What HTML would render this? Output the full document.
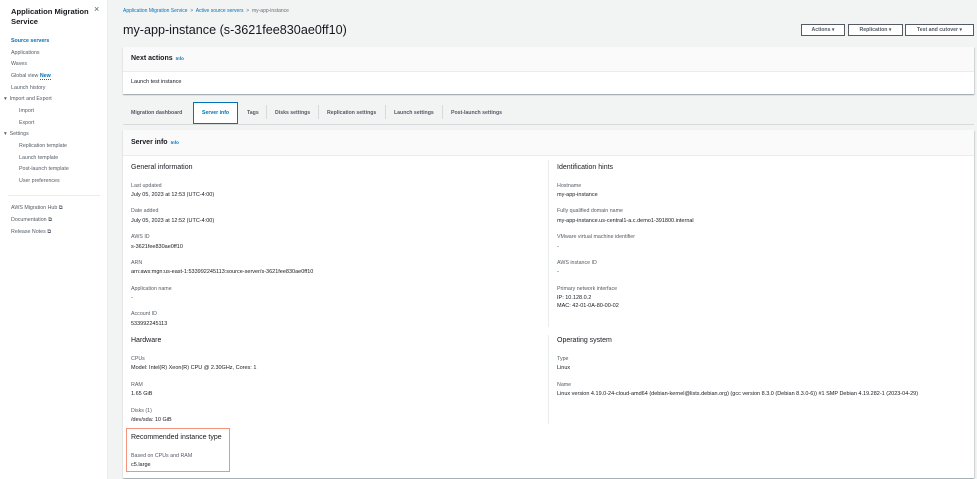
<!DOCTYPE html>
<html><head><meta charset="utf-8"><style>
*{margin:0;padding:0;box-sizing:border-box}
body{width:977px;height:479px;overflow:hidden;background:#f2f3f3;font-family:"Liberation Sans",sans-serif;color:#16191f;position:relative}
.a{position:absolute;white-space:nowrap}
#side{position:absolute;left:0;top:0;width:108px;height:479px;background:#fff;border-right:1px solid #eaeded}
.s{position:absolute;font-size:5.3px;color:#545b64;white-space:nowrap}
.card{position:absolute;background:#fff;box-shadow:0 1px 1px rgba(0,28,36,.3),1px 1px 1px rgba(0,28,36,.1)}
.hd{background:#fafafa;border-bottom:1px solid #eaeded;position:absolute;left:0;right:0;top:0}
.h2{font-size:7px;font-weight:bold}
.info{color:#0073bb;font-size:4.5px;font-weight:bold;margin-left:3px}
.h3{font-size:7px;color:#16191f}
.l{font-size:5.3px;color:#545b64}
.v{font-size:5.5px;color:#16191f}
.btn{position:absolute;top:24px;height:12px;border:1px solid #545b64;background:#fff;font-size:5.2px;font-weight:bold;color:#545b64;text-align:center;line-height:10px}
.tab{position:absolute;top:110px;font-size:5.2px;font-weight:bold;color:#545b64}
.sep{position:absolute;top:105px;width:1px;height:14px;background:#d5dbdb}
</style></head><body>
<div id="side">
<div class="a" style="left:11px;top:7px;font-size:7.6px;font-weight:bold;line-height:9.5px">Application Migration<br>Service</div>
<div class="a" style="left:94px;top:4px;font-size:9px;color:#545b64">×</div>
<div class="s" style="left:11px;top:38px;color:#0073bb;font-weight:bold">Source servers</div>
<div class="s" style="left:11px;top:50px">Applications</div>
<div class="s" style="left:11px;top:61px">Waves</div>
<div class="s" style="left:11px;top:73px">Global view <span style="color:#0073bb;font-weight:bold;border-bottom:1px dotted #0073bb">New</span></div>
<div class="s" style="left:11px;top:85px">Launch history</div>
<div class="s" style="left:4px;top:96px">▾ &nbsp;Import and Export</div>
<div class="s" style="left:19px;top:108px">Import</div>
<div class="s" style="left:19px;top:120px">Export</div>
<div class="s" style="left:4px;top:131px">▾ &nbsp;Settings</div>
<div class="s" style="left:19px;top:143px">Replication template</div>
<div class="s" style="left:19px;top:155px">Launch template</div>
<div class="s" style="left:19px;top:166px">Post-launch template</div>
<div class="s" style="left:19px;top:178px">User preferences</div>
<div style="position:absolute;left:8px;top:195px;width:92px;height:1px;background:#eaeded"></div>
<div class="s" style="left:11px;top:205px">AWS Migration Hub ⧉</div>
<div class="s" style="left:11px;top:217px">Documentation ⧉</div>
<div class="s" style="left:11px;top:229px">Release Notes ⧉</div>
</div>

<div class="a" style="left:123px;top:8px;font-size:5px;color:#0073bb">Application Migration Service <span style="color:#687078">&nbsp;&gt;&nbsp;</span> Active source servers <span style="color:#687078">&nbsp;&gt;&nbsp; my-app-instance</span></div>
<div class="a" style="left:123px;top:23px;font-size:12.6px;color:#16191f">my-app-instance (s-3621fee830ae0ff10)</div>
<div class="btn" style="left:801px;width:44px">Actions ▾</div>
<div class="btn" style="left:848px;width:55px">Replication ▾</div>
<div class="btn" style="left:905px;width:69px">Test and cutover ▾</div>

<div class="card" style="left:123px;top:47px;width:851px;height:47px">
<div class="hd" style="height:25px"></div>
<div class="a h2" style="left:8px;top:8px">Next actions<span class="info">Info</span></div>
<div class="a v" style="left:8px;top:32px">Launch test instance</div>
</div>

<div style="position:absolute;left:123px;top:124px;width:851px;height:1px;background:#d5dbdb"></div>
<div class="tab" style="left:131px">Migration dashboard</div>
<div style="position:absolute;left:193px;top:102px;width:45px;height:22px;border:1px solid #0073bb;background:#fff"></div>
<div class="tab" style="left:202px;color:#0073bb">Server info</div>
<div class="tab" style="left:247px">Tags</div>
<div class="sep" style="left:266px"></div>
<div class="tab" style="left:275px">Disks settings</div>
<div class="sep" style="left:318px"></div>
<div class="tab" style="left:327px">Replication settings</div>
<div class="sep" style="left:385px"></div>
<div class="tab" style="left:394px">Launch settings</div>
<div class="sep" style="left:442px"></div>
<div class="tab" style="left:451px">Post-launch settings</div>

<div class="card" style="left:123px;top:130px;width:851px;height:348px">
<div class="hd" style="height:26px"></div>
<div class="a h2" style="left:8px;top:9px">Server info<span class="info">Info</span></div>
</div>
<div style="position:absolute;left:548px;top:160px;width:1px;height:167px;background:#eaeded"></div>
<div style="position:absolute;left:548px;top:335px;width:1px;height:89px;background:#eaeded"></div>

<div class="a h3" style="left:131px;top:164px">General information</div>
<div class="a l" style="left:131px;top:183px">Last updated</div><div class="a v" style="left:131px;top:192px">July 05, 2023 at 12:53 (UTC-4:00)</div>
<div class="a l" style="left:131px;top:208px">Date added</div><div class="a v" style="left:131px;top:218px">July 05, 2023 at 12:52 (UTC-4:00)</div>
<div class="a l" style="left:131px;top:234px">AWS ID</div><div class="a v" style="left:131px;top:244px">s-3621fee830ae0ff10</div>
<div class="a l" style="left:131px;top:260px">ARN</div><div class="a v" style="left:131px;top:269px">arn:aws:mgn:us-east-1:533992245113:source-server/s-3621fee830ae0ff10</div>
<div class="a l" style="left:131px;top:286px">Application name</div><div class="a v" style="left:131px;top:295px">-</div>
<div class="a l" style="left:131px;top:311px">Account ID</div><div class="a v" style="left:131px;top:321px">533992245113</div>
<div class="a h3" style="left:131px;top:337px">Hardware</div>
<div class="a l" style="left:131px;top:356px">CPUs</div><div class="a v" style="left:131px;top:365px">Model: Intel(R) Xeon(R) CPU @ 2.30GHz, Cores: 1</div>
<div class="a l" style="left:131px;top:382px">RAM</div><div class="a v" style="left:131px;top:391px">1.65 GiB</div>
<div class="a l" style="left:131px;top:408px">Disks (1)</div><div class="a v" style="left:131px;top:417px">/dev/sda: 10 GiB</div>
<div style="position:absolute;left:126px;top:428px;width:104px;height:44px;border:1.5px solid #f2937a"></div>
<div class="a h3" style="left:131px;top:434px">Recommended instance type</div>
<div class="a l" style="left:131px;top:453px">Based on CPUs and RAM</div><div class="a v" style="left:131px;top:462px">c5.large</div>

<div class="a h3" style="left:557px;top:164px">Identification hints</div>
<div class="a l" style="left:557px;top:183px">Hostname</div><div class="a v" style="left:557px;top:192px">my-app-instance</div>
<div class="a l" style="left:557px;top:208px">Fully qualified domain name</div><div class="a v" style="left:557px;top:218px">my-app-instance.us-central1-a.c.demo1-391800.internal</div>
<div class="a l" style="left:557px;top:234px">VMware virtual machine identifier</div><div class="a v" style="left:557px;top:244px">-</div>
<div class="a l" style="left:557px;top:260px">AWS instance ID</div><div class="a v" style="left:557px;top:269px">-</div>
<div class="a l" style="left:557px;top:286px">Primary network interface</div><div class="a v" style="left:557px;top:295px">IP: 10.128.0.2</div><div class="a v" style="left:557px;top:303px">MAC: 42-01-0A-80-00-02</div>
<div class="a h3" style="left:557px;top:337px">Operating system</div>
<div class="a l" style="left:557px;top:356px">Type</div><div class="a v" style="left:557px;top:365px">Linux</div>
<div class="a l" style="left:557px;top:382px">Name</div><div class="a v" style="left:557px;top:391px">Linux version 4.19.0-24-cloud-amd64 (debian-kernel@lists.debian.org) (gcc version 8.3.0 (Debian 8.3.0-6)) #1 SMP Debian 4.19.282-1 (2023-04-29)</div>
</body></html>
